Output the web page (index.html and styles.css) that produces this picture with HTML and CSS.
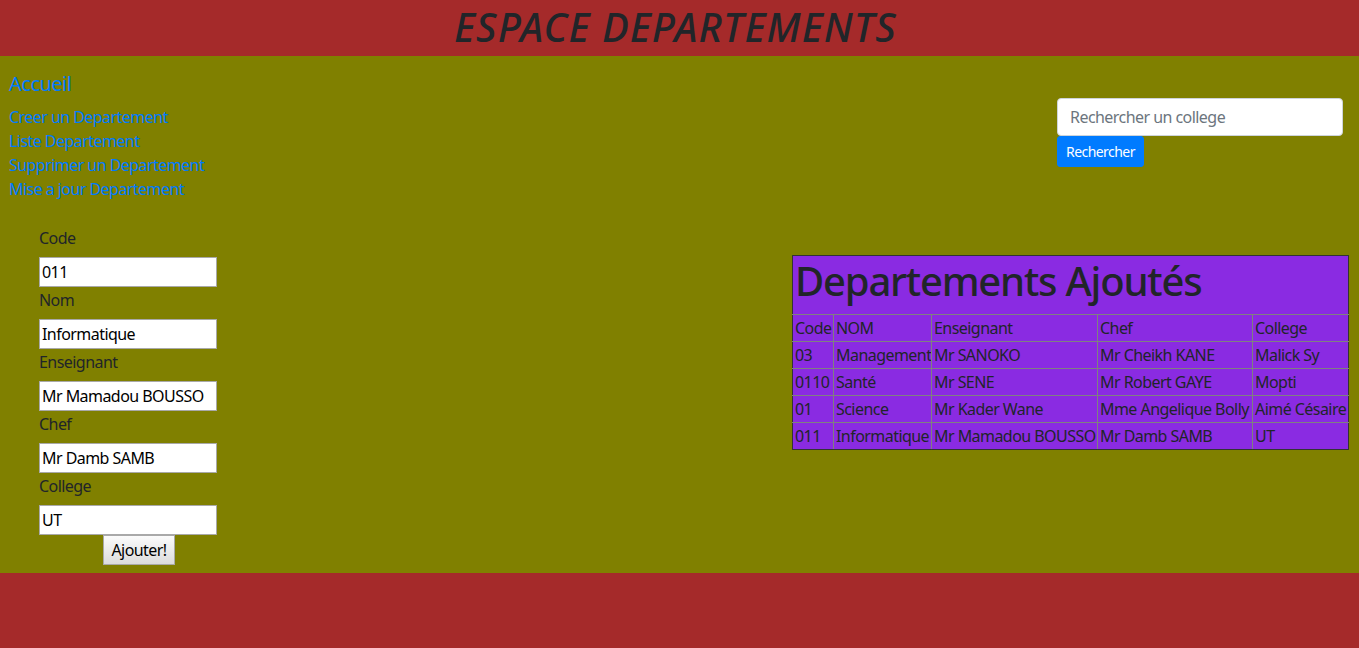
FILE: index.html
```html
<!DOCTYPE html>
<html lang="fr">
<head>
<meta charset="utf-8">
<title>Espace Departements</title>
<link rel="stylesheet" href="styles.css">
</head>
<body>
<header class="banner">
  <h1 class="title">ESPACE DEPARTEMENTS</h1>
</header>
<main class="content">
  <div class="top">
    <nav class="nav">
      <a class="home" href="#">Accueil</a>
      <ul class="links">
        <li><a href="#">Creer un Departement</a></li>
        <li><a href="#">Liste Departement</a></li>
        <li><a href="#">Supprimer un Departement</a></li>
        <li><a href="#">Mise a jour Departement</a></li>
      </ul>
    </nav>
    <form class="search">
      <input class="search-input" type="text" placeholder="Rechercher un college">
      <button class="search-btn" type="button">Rechercher</button>
    </form>
  </div>
  <div class="bottom">
    <form class="dept-form">
      <label class="field-label">Code</label>
      <input class="field" type="text" value="011">
      <label class="field-label">Nom</label>
      <input class="field" type="text" value="Informatique">
      <label class="field-label">Enseignant</label>
      <input class="field" type="text" value="Mr Mamadou BOUSSO">
      <label class="field-label">Chef</label>
      <input class="field" type="text" value="Mr Damb SAMB">
      <label class="field-label">College</label>
      <input class="field" type="text" value="UT">
      <div class="submit-row"><button class="submit" type="button">Ajouter!</button></div>
    </form>
    <table class="dept-table">
      <colgroup>
        <col class="c1"><col class="c2"><col class="c3"><col class="c4"><col class="c5">
      </colgroup>
      <tr><td class="cap" colspan="5"><h2 class="cap-title">Departements Ajoutés</h2></td></tr>
      <tr><td>Code</td><td>NOM</td><td>Enseignant</td><td>Chef</td><td>College</td></tr>
      <tr><td>03</td><td>Management</td><td>Mr SANOKO</td><td>Mr Cheikh KANE</td><td>Malick Sy</td></tr>
      <tr><td>0110</td><td>Santé</td><td>Mr SENE</td><td>Mr Robert GAYE</td><td>Mopti</td></tr>
      <tr><td>01</td><td>Science</td><td>Mr Kader Wane</td><td>Mme Angelique Bolly</td><td>Aimé Césaire</td></tr>
      <tr><td>011</td><td>Informatique</td><td>Mr Mamadou BOUSSO</td><td>Mr Damb SAMB</td><td>UT</td></tr>
    </table>
  </div>
</main>
</body>
</html>
```
FILE: styles.css
```css
* { box-sizing: border-box; }
html, body { margin: 0; padding: 0; }
body {
  background: #a52a2a;
  font-family: "Noto Sans", "Open Sans", sans-serif;
  font-size: 16px;
  line-height: 1.5;
  letter-spacing: -0.55px;
  color: #212529;
  min-height: 648px;
}
.banner {
  height: 56px;
  background: #a52a2a;
  text-align: center;
}
.title {
  margin: 0;
  padding-top: 3px;
  padding-right: 8px;
  font-size: 40px;
  line-height: 48px;
  font-style: italic;
  font-weight: 500;
  letter-spacing: 1.1px;
  color: #212529;
}
.content {
  background: #808000;
  padding: 16px 0 8px 0;
}
.top {
  display: flex;
  justify-content: space-between;
  align-items: flex-start;
}
.nav { padding-left: 9px; }
.home {
  display: block;
  font-size: 20px;
  line-height: 24px;
  letter-spacing: -0.5px;
  color: #007bff;
  text-decoration: none;
  margin-bottom: 9px;
}
.links { list-style: none; margin: 0; padding: 0; }
.links a {
  color: #007bff;
  text-decoration: none;
  line-height: 24px;
}
.search {
  margin-top: 26px;
  margin-right: 16px;
  width: 286px;
  display: flex;
  flex-direction: column;
  align-items: flex-start;
}
.search-input {
  width: 286px;
  height: 38px;
  padding: 6px 12px;
  border: 1px solid #ced4da;
  border-radius: 4px;
  font: inherit;
  letter-spacing: -0.55px;
  background: #fff;
  color: #495057;
}
.search-input::placeholder { color: #6c757d; }
.search-btn {
  height: 31px;
  padding: 4px 8px;
  border: 1px solid #007bff;
  border-radius: 3px;
  background: #007bff;
  color: #fff;
  font-family: inherit;
  font-size: 14px;
  line-height: 21px;
  letter-spacing: -0.55px;
}
.bottom {
  display: flex;
  justify-content: space-between;
  align-items: flex-start;
  margin-top: 25px;
}
.dept-form {
  padding-left: 39px;
  display: flex;
  flex-direction: column;
  width: 217px;
  box-sizing: content-box;
}
.field-label {
  line-height: 24px;
  margin-bottom: 7px;
  color: #212529;
}
.field-label + .field { margin-bottom: 0; }
.field {
  width: 178px;
  height: 30px;
  padding: 1px 2px;
  border: 1px solid #a9a9a9;
  background: #fff;
  color: #000;
  font: inherit;
  font-size: 16px;
  letter-spacing: -0.55px;
}
.field + .field-label { margin-top: 1px; }
.submit-row {
  display: flex;
  padding-left: 64px;
}
.submit {
  height: 30px;
  width: 72px;
  padding: 1px 6px;
  border: 1px solid #a9a9a9;
  background: linear-gradient(#fbfbfb, #dcdcdc);
  color: #000;
  font: inherit;
  font-size: 16px;
  line-height: 24px;
  letter-spacing: -0.55px;
}
.dept-table {
  margin-top: 29px;
  margin-right: 10px;
  border-collapse: collapse;
  table-layout: fixed;
  width: 556px;
  background: #8a2be2;
  border: 1px solid #333;
}
.c1 { width: 41px; }
.c2 { width: 98px; }
.c3 { width: 166px; }
.c4 { width: 155px; }
.c5 { width: 96px; }
.dept-table td {
  border: 1px solid #808080;
  padding: 0 1px 0 2px;
  height: 27px;
  line-height: 24px;
  white-space: nowrap;
  overflow: hidden;
  color: #212529;
}
.dept-table tr:first-child td { border-top-color: #333; }
.dept-table td:first-child { border-left-color: #333; }
.dept-table td:last-child { border-right-color: #333; }
.dept-table tr:last-child td { border-bottom-color: #333; }
.dept-table td.cap { height: 59px; padding: 0 2px; overflow: visible; }
.cap-title {
  margin: 0 0 8px 0;
  font-size: 40px;
  line-height: 48px;
  font-weight: 500;
  letter-spacing: -1.2px;
  color: #212529;
}
```
